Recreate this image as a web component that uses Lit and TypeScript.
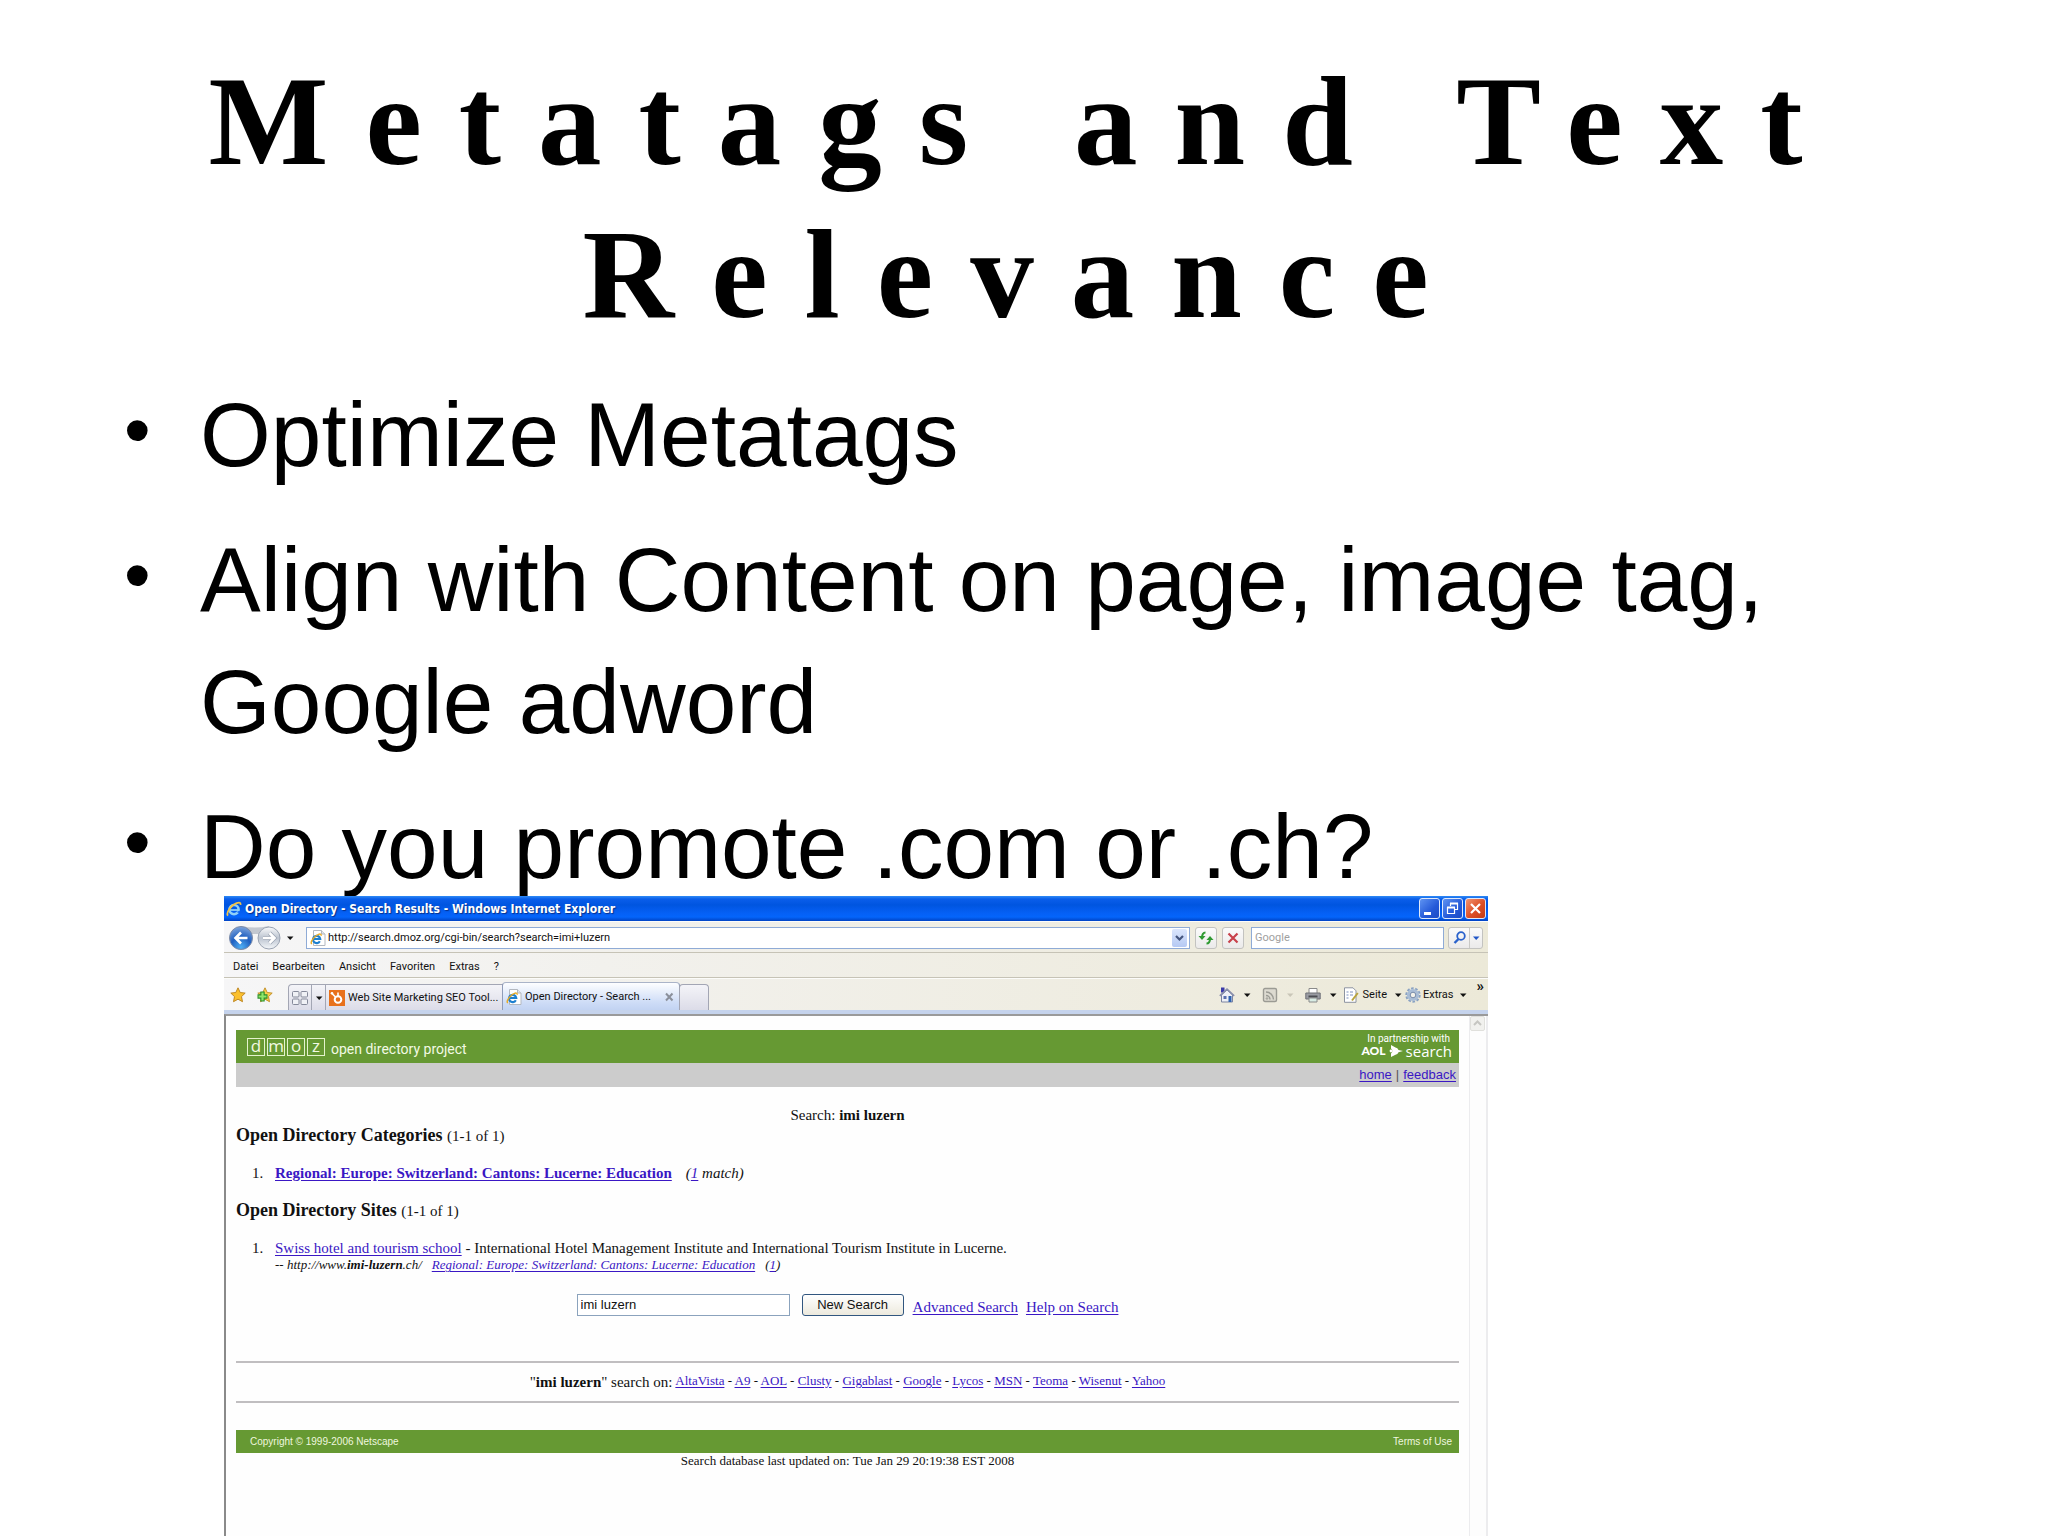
import { LitElement, html, css, svg, nothing } from "lit";
import { customElement } from "lit/decorators.js";

const ieIcon = html`<svg class="i16" viewBox="0 0 16 16" aria-hidden="true">
  <circle cx="8" cy="8.6" r="4.6" fill="none" stroke="#8fd0f8" stroke-width="2.6"/>
  <path d="M4 9h8.6" stroke="#8fd0f8" stroke-width="1.8"/>
  <path d="M11.500 10.200h4v1.600h-4z" fill="#0560f5"/>
  <path d="M2 14.600C-.6 12 5.500 4 10.500 2.200c3-1.200 4.300-.6 4 1.600" fill="none" stroke="#f5c443" stroke-width="1.800"/>
</svg>`;

const iePage = html`<svg class="i16" viewBox="0 0 16 16" aria-hidden="true">
  <path d="M3.500.5h8l3.500 3.500v11.500H3.500z" fill="#fff" stroke="#b3b8c0"/>
  <path d="M11.500.5v3.500H15" fill="#e4e8ee" stroke="#b3b8c0"/>
  <path d="M9.800 11.200A3.600 3.600 0 1 1 10.200 9H3.800" fill="none" stroke="#1c7fd0" stroke-width="2.200"/>
  <path d="M1.800 14C-.6 12 5 5.500 8.500 4.300c2-.6 3 0 2.500 1.400" fill="none" stroke="#e9aa22" stroke-width="1.400"/>
</svg>`;

const caret = (fill = "#111") => html`<svg class="caret" viewBox="0 0 8 8" aria-hidden="true"><path d="M1 2.500h6.500L4.200 6z" fill=${fill}/></svg>`;

const star = (fill: string, stroke: string) => svg`<path d="M8 .8l2.200 4.700 5 .6-3.700 3.500 1 5.100L8 12.200l-4.500 2.500 1-5.100L.8 6.100l5-.6z" fill=${fill} stroke=${stroke} stroke-width=".9" stroke-linejoin="round"/>`;

/** Title bar, address bar, menus and tabs of the browser. */
@customElement("browser-chrome")
class BrowserChrome extends LitElement {
  static styles = css`
    :host { display: block; font: 11px/14px Roboto, "Liberation Sans", sans-serif; color: #111; }
    svg { display: block; flex: none; }
    button, input { font: inherit; color: inherit; box-sizing: border-box; margin: 0; }
    button { display: flex; align-items: center; justify-content: center; padding: 0; border: 0; background: none; }
    .i16 { width: 16px; height: 16px; }
    .caret { width: 8px; height: 8px; }
    .title { display: flex; align-items: center; gap: 3px; height: 25px; padding: 0 2px; box-sizing: border-box;
      background: linear-gradient(#2f8bf5 0, #0a5eea 3px, #0055e0 9px, #0560f5 17px, #0465fb 21px, #0143c4 25px); }
    .title h2 { flex: 1; margin: 0; font: bold 12px/16px "DejaVu Sans Condensed", "DejaVu Sans", sans-serif; color: #fff; text-shadow: 1px 1px 1px #06308a; }
    .title button { width: 21px; height: 21px; border: 1px solid #dfe9fb; border-radius: 3px;
      background: linear-gradient(135deg, #5e93f2, #2459d8 60%, #1c4cc4); }
    .title .close { background: linear-gradient(135deg, #f0936f, #dd4f26 55%, #c53c14); }
    .wins { display: flex; gap: 2px; }
    .bar { display: flex; align-items: center; box-sizing: border-box;
      background: linear-gradient(90deg, #f6f6f7, #f2f1ed 30%, #ece9d8); }
    .nav { height: 32px; padding: 1px 5px 0; gap: 5px; border-bottom: 1px solid #c6c3b6; border-top: 1px solid #fcfcfa; }
    .round { width: 52px; height: 26px; }
    .addr { display: flex; align-items: center; flex: 1; gap: 2px; height: 22px; padding: 0 2px 0 3px; margin-left: 7px; background: #fff; border: 1px solid #8fabd6; box-sizing: border-box; }
    .addr input { flex: 1; min-width: 0; border: 0; padding: 0; background: none; outline: none; }
    .addr button { width: 15px; height: 18px; background: linear-gradient(#dbe6fd, #b5c9f3); border-radius: 2px; }
    .tool { width: 22px; height: 22px; border: 1px solid #c3c3c0; border-radius: 3px; background: linear-gradient(#fbfbfb, #ebeaea); }
    .google { width: 193px; height: 22px; margin: 0 -1px 0 2px; padding: 0 3px; border: 1px solid #8fabd6; background: #fff; outline: none; }
    .google::placeholder { color: #a0a0a0; opacity: 1; }
    .split { display: flex; border: 1px solid #c3c3c0; border-radius: 3px; height: 22px; box-sizing: border-box; background: linear-gradient(#fbfbfb, #ebeaea); }
    .split button { width: 20px; }
    .split button + button { width: 13px; border-left: 1px solid #c9c9c6; }
    .menu { height: 25px; padding: 3px 9px 0; gap: 14px; border-bottom: 1px solid #c6c3b6; }
    .tabs { height: 32px; align-items: flex-end; padding-left: 5px; border-top: 1px solid #fcfcfa; }
    .fav { height: 31px; width: 18px; margin-right: 9px; }
    .tab { height: 26px; border: 1px solid #a3a6b4; border-bottom: 0; border-radius: 4px 4px 0 0; margin-right: -1px; gap: 3px; padding: 0 3px;
      justify-content: flex-start; background: linear-gradient(#f4f4f8, #dcdce8); white-space: nowrap; }
    .quick { width: 24px; margin-left: 5px; border-radius: 4px 0 0 0; }
    .drop { width: 15px; border-radius: 0; }
    .first { width: 178px; border-radius: 0; }
    .on { width: 178px; height: 28px; gap: 3px; background: linear-gradient(#fdfeff, #cfddf7 70%, #c2d3f2); border-color: #8f9cb8; border-top-color: #aab4c8; }
    .on span { flex: 1; text-align: left; }
    .blank { width: 30px; }
    .cmds { display: flex; align-items: center; align-self: stretch; margin-left: auto; padding-right: 4px; }
    .cmds button { height: 31px; gap: 3px; }
    .cmds .wide { gap: 8px; margin-right: 11px; }
    .cmds .print { margin-right: 6px; }
    .cmds .seite { gap: 4px; margin-right: 3px; }
    .cmds .more { align-self: flex-start; height: 14px; font-weight: bold; font-size: 15px; }
    .cmds .extras { gap: 2px; margin-right: 10px; }
    .label { margin-right: 3px; }
    .band { height: 4px; background: #c5d3ec; }
  `;

  render() {
    return html`
      <div class="title">
        ${ieIcon}
        <h2>Open Directory - Search Results - Windows Internet Explorer</h2>
        <div class="wins">
          <button aria-label="Minimieren"><svg width="19" height="19"><path d="M4 14.500h7" stroke="#fff" stroke-width="3"/></svg></button>
          <button aria-label="Wiederherstellen"><svg width="19" height="19" fill="none" stroke="#fff"><path d="M7.500 7V4.500h7v6H12" stroke-width="1.200"/><path d="M7 4.500h8M4 8.500h8" stroke-width="2"/><path d="M4.500 8.500h7v6h-7z" stroke-width="1.200"/></svg></button>
          <button class="close" aria-label="Schließen"><svg width="19" height="19"><path d="M5 5l9 9M14 5l-9 9" stroke="#fff" stroke-width="2.200"/></svg></button>
        </div>
      </div>
      <div class="bar nav">
        <svg class="round" viewBox="0 0 52 26" aria-hidden="true">
          <defs>
            <radialGradient id="b" cx=".5" cy=".9" r=".9"><stop offset="0" stop-color="#4fb0f5"/><stop offset=".5" stop-color="#1f5fc0"/><stop offset="1" stop-color="#7fa5dc"/></radialGradient>
            <linearGradient id="f" x2="0" y2="1"><stop offset="0" stop-color="#fafbfc"/><stop offset=".5" stop-color="#bcc4d0"/><stop offset="1" stop-color="#f4f7fa"/></linearGradient>
          </defs>
          <path d="M12 1q14 3 28 0v8H12z" fill="#c3c8d0"/>
          <circle cx="12" cy="13" r="11.500" fill="url(#b)" stroke="#7d8ba6"/>
          <path d="M18.500 13H7M12 7.500L6.500 13l5.500 5.500" fill="none" stroke="#fff" stroke-width="2.600"/>
          <circle cx="40" cy="13" r="11" fill="url(#f)" stroke="#9aa3b2"/>
          <path d="M34 13h11.500M40.500 8l5 5-5 5" fill="none" stroke="#9aa3b2" stroke-width="4"/>
          <path d="M34 13h11.500M40.500 8l5 5-5 5" fill="none" stroke="#fff" stroke-width="2.600"/>
        </svg>
        <button aria-label="Verlauf">${caret()}</button>
        <div class="addr">
          ${iePage}
          <input aria-label="Adresse" .value=${"http://search.dmoz.org/cgi-bin/search?search=imi+luzern"}>
          <button aria-label="Adressen"><svg width="11" height="10"><path d="M2 3l3.500 3.500L9 3" fill="none" stroke="#44557e" stroke-width="2.200"/></svg></button>
        </div>
        <button class="tool" aria-label="Aktualisieren"><svg width="18" height="16" viewBox="0 0 18 16" fill="none" stroke="#2f9a32" stroke-width="2"><path d="M8.500 2.500C6 2.500 5 4 5 8"/><path d="M1.500 6h7L5 10z" fill="#2f9a32" stroke="none"/><path d="M9.500 13.500c2.500 0 3.500-2 3.500-5"/><path d="M9.500 10h7L13 6z" fill="#2f9a32" stroke="none"/></svg></button>
        <button class="tool" aria-label="Stopp"><svg width="14" height="14"><path d="M2.500 2.500l9 9M11.500 2.500l-9 9" stroke="#c8414b" stroke-width="2.200"/></svg></button>
        <input class="google" aria-label="Google" placeholder="Google">
        <div class="split">
          <button aria-label="Suchen"><svg width="15" height="15" fill="none" stroke="#2a62cc"><circle cx="9" cy="6" r="3.800" stroke-width="1.800"/><path d="M6.500 9L2.500 13" stroke-width="2.400"/></svg></button>
          <button aria-label="Suchoptionen">${caret("#1f55c8")}</button>
        </div>
      </div>
      <div class="bar menu">${["Datei", "Bearbeiten", "Ansicht", "Favoriten", "Extras", "?"].map((m) => html`<button>${m}</button>`)}</div>
      <div class="bar tabs">
        <button class="fav" aria-label="Favoriten"><svg class="i16" viewBox="0 0 16 16">${star("#fbc02d", "#b9801a")}</svg></button>
        <button class="fav" aria-label="Hinzufügen"><svg class="i16" viewBox="0 0 16 16">${star("#fbcf4d", "#c08a20")}<path d="M5.500 4.500v10M.5 9.500h10" stroke="#2b8f2b" stroke-width="4.400"/><path d="M5.500 5.500v8M1.500 9.500h8" stroke="#8fe66a" stroke-width="2.200"/></svg></button>
        <button class="tab quick" aria-label="Schnellregisterkarten"><svg width="16" height="16" fill="#f0f1f6" stroke="#85899a"><rect x=".5" y="1.500" width="6.500" height="5.500" rx="1"/><rect x="9" y="1.500" width="6.500" height="5.500" rx="1"/><rect x=".5" y="9" width="6.500" height="5.500" rx="1"/><rect x="9" y="9" width="6.500" height="5.500" rx="1"/></svg></button>
        <button class="tab drop" aria-label="Registerkartenliste">${caret()}</button>
        <button class="tab first"><svg class="i16" viewBox="0 0 16 16"><rect width="16" height="16" fill="#e8711c"/><circle cx="9" cy="9.500" r="3.300" fill="none" stroke="#fff" stroke-width="2"/><path d="M2.500 3l4 4M9 6V2.500" stroke="#fff" stroke-width="1.600"/><circle cx="3" cy="3.200" r="1.300" fill="#fff"/></svg>Web Site Marketing SEO Tool...</button>
        <button class="tab on">${iePage}<span>Open Directory - Search ...</span><svg width="12" height="12"><path d="M2 2.500l6.500 7M8.500 2.500l-6.500 7" stroke="#8b909b" stroke-width="2"/></svg></button>
        <button class="tab blank" aria-label="Neue Registerkarte"></button>
        <div class="cmds">
          <button class="wide" aria-label="Startseite"><svg class="i16" viewBox="0 0 16 16"><path d="M2 .5h3.500v5H2z" fill="#3a3aa8"/><path d="M2.500 8v7h11V8L8 3z" fill="#eef0f6" stroke="#7d84a0"/><path d="M.8 8.800L8 2l7.200 6.800" fill="none" stroke="#8a90ac" stroke-width="1.600"/><path d="M9.500 9h3v6h-3z" fill="#2f62b0"/><path d="M4.500 9h3v3h-3z" fill="#5b6fae"/></svg>${caret()}</button>
          <button class="wide" aria-label="Feeds"><svg class="i16" viewBox="0 0 16 16" fill="none" stroke="#9b9b94"><rect x="1.500" y="1.500" width="13" height="13" rx="1.500" fill="#dcdad0" stroke-width="1.400"/><path d="M4 8.500a4 4 0 0 1 4 4M4 5a7.500 7.500 0 0 1 7.500 7.500" stroke-width="1.500"/><circle cx="5" cy="11.500" r=".8"/></svg>${caret("#c9c6b8")}</button>
          <button class="wide print" aria-label="Drucken"><svg class="i16" viewBox="0 0 16 16"><path d="M4 1.500h8v5H4z" fill="#fff" stroke="#8a8a8a"/><path d="M.8 6h14.400v6H.8z" fill="#9a9ca3" stroke="#6e7077"/><path d="M3.500 8.500h9v2h-9z" fill="#4b4d52"/><path d="M4 11h8v4H4z" fill="#d8ece4" stroke="#8a8a8a"/></svg>${caret()}</button>
          <button class="seite"><svg class="i16" viewBox="0 0 16 16"><path d="M1.500.8h8.500l3 3v11.500H1.500z" fill="#fff" stroke="#8d93a0"/><path d="M3.500 5h2M7 5h3M3.500 8h2M7 8h3M3.500 11h2" stroke="#7d8fc0" stroke-width="1.200"/><path d="M14.800 6L9 13.500" stroke="#b9a33c" stroke-width="2"/></svg><span class="label">Seite</span>${caret()}</button>
          <button class="extras"><svg class="i16" viewBox="0 0 16 16" fill="none"><circle cx="8" cy="8" r="6.700" stroke="#8aa2c2" stroke-width="2" stroke-dasharray="2.600 1.600"/><circle cx="8" cy="8" r="4.600" stroke="#a9bdd6" stroke-width="3"/><circle cx="8" cy="8" r="2.800" fill="#f2f1ea" stroke="#7389ab"/></svg><span class="label">Extras</span>${caret()}</button>
          <button class="more" aria-label="Weitere">»</button>
        </div>
      </div>
      <div class="band"></div>
    `;
  }
}

const PLACE = "Regional: Europe: Switzerland: Cantons: Lucerne: Education";
const ENGINES = ["AltaVista", "A9", "AOL", "Clusty", "Gigablast", "Google", "Lycos", "MSN", "Teoma", "Wisenut", "Yahoo"];

/** Search results page shown inside the browser. */
@customElement("directory-page")
class DirectoryPage extends LitElement {
  static styles = css`
    :host { display: flex; flex: 1; border-left: 2px solid #8a8a8a; border-top: 2px solid #9a9a9a; background: #fefefe; color: #111;
      font: 15px/18px "Liberation Serif", serif; }
    a { color: #3a17c4; text-underline-offset: 2px; }
    main { flex: 1; padding: 14px 10px 0; }
    .head { display: flex; justify-content: space-between; height: 33px; padding: 0 7px 0 11px; background: #669933; color: #fff; box-sizing: border-box; }
    .brand { display: flex; gap: 2px; align-items: flex-end; padding-bottom: 7px; color: #f2f9e4; font: 14px/14px Roboto, sans-serif; }
    .brand b { width: 16px; height: 16px; border: 1px solid #e4f2cc; font: 17px/13px "Open Sans", sans-serif; text-align: center; }
    .brand span { margin-left: 4px; }
    .aol { font: 10px/12px Roboto, sans-serif; text-align: right; padding-top: 3px; }
    .aol p { margin: 0 2px 0 0; }
    .aol div { display: flex; align-items: center; gap: 3px; height: 12px; }
    .aol strong { font: 900 12px/12px Lato, sans-serif; }
    .aol span { font: 15px/12px "Open Sans", sans-serif; }
    .links { display: flex; justify-content: flex-end; gap: 4px; height: 24px; padding-right: 3px; background: #cccccc; font: 13px/24px "Liberation Sans", sans-serif; color: #555; }
    .query { margin: 19px 0 0; text-align: center; }
    h3 { margin: 0; font-size: 18px; line-height: 22px; }
    h3 small { font-size: 15px; font-weight: normal; }
    ol { list-style: none; margin: 17px 0; padding: 0 0 0 16px; }
    li { display: grid; grid-template-columns: 23px 1fr; }
    li::before { content: "1."; }
    .cat { display: flex; gap: 14px; }
    .src { display: flex; gap: 10px; font: italic 13px/16px "Liberation Serif", serif; }
    form { display: flex; align-items: center; justify-content: center; height: 23px; margin: 20px 0 0; }
    form input { box-sizing: border-box; width: 213px; height: 22px; margin: 0 12px 0 0; padding: 0 3px; border: 1px solid #8ba3bd; font: 13px "Liberation Sans", sans-serif; color: #111; background: #fff; }
    form button { width: 102px; height: 22px; margin: 0 9px 0 0; padding: 0; border: 1px solid #31567f; border-radius: 3px; background: linear-gradient(#fff, #ece9dd); font: 13px "Liberation Sans", sans-serif; color: #111; }
    form a { margin-top: 5px; }
    form a + a { margin-left: 8px; }
    .rule { border: 0; height: 2px; margin: 0; background: #c0bec0; }
    .wide { margin-top: 45px; }
    .engines { display: flex; justify-content: center; gap: 3px; margin: 10px 0; }
    .engines span { font-size: 13px; line-height: 16px; }
    .foot { display: flex; justify-content: space-between; height: 23px; margin-top: 27px; padding: 0 7px 0 14px; box-sizing: border-box; background: #669933; color: #eef7df; font: 10px/24px "Liberation Sans", sans-serif; }
    .foot a { color: inherit; text-decoration: none; }
    .date { margin: 0; text-align: center; font-size: 13px; line-height: 16px; }
    .scroll { width: 16px; border: solid #ececee; border-width: 0 2px 0 1px; background: #fdfdfd; }
    .scroll button { display: block; width: 15px; height: 15px; padding: 0; border: 1px solid #e0e0dc; border-radius: 2px; background: #f1f1ee; }
    .scroll svg { display: block; }
  `;

  render() {
    return html`
      <main>
        <div class="head">
          <div class="brand">${[..."dmoz"].map((c) => html`<b>${c}</b>`)}<span>open directory project</span></div>
          <div class="aol">
            <p>In partnership with</p>
            <div><strong>AOL</strong><svg width="14" height="12" viewBox="0 0 14 12" aria-hidden="true"><path d="M2 0l4.500 2.500A4 4 0 0 1 9.500 5L14 6l-4.500 1.200a4 4 0 0 1-3 2.500L2 12V8.500a3 3 0 0 0 0-5z" fill="#fff"/><circle cx="2" cy="6" r="1.400" fill="#fff"/></svg><span>search</span></div>
          </div>
        </div>
        <div class="links"><a href="#home">home</a>|<a href="#feedback">feedback</a></div>
        <p class="query">Search: <b>imi luzern</b></p>
        <h3>Open Directory Categories <small>(1-1 of 1)</small></h3>
        <ol><li><div class="cat"><b><a href="#cat">${PLACE}</a></b><i>(<a href="#match">1</a> match)</i></div></li></ol>
        <h3>Open Directory Sites <small>(1-1 of 1)</small></h3>
        <ol><li><div>
          <div><a href="#imi">Swiss hotel and tourism school</a> - International Hotel Management Institute and International Tourism Institute in Lucerne.</div>
          <div class="src"><span>-- http://www.<b>imi-luzern</b>.ch/</span><a href="#cat">${PLACE}</a><span>(<a href="#one">1</a>)</span></div>
        </div></li></ol>
        <form @submit=${(e: Event) => e.preventDefault()}>
          <input aria-label="Search" .value=${"imi luzern"}>
          <button>New Search</button>
          <a href="#advanced">Advanced Search</a>
          <a href="#help">Help on Search</a>
        </form>
        <hr class="rule wide">
        <div class="engines"><div>"<b>imi luzern</b>" search on:</div><span>${ENGINES.map((e, i) => html`${i ? " - " : nothing}<a href="#${e}">${e}</a>`)}</span></div>
        <hr class="rule">
        <div class="foot"><span>Copyright © 1999-2006 Netscape</span><a href="#terms">Terms of Use</a></div>
        <p class="date">Search database last updated on: Tue Jan 29 20:19:38 EST 2008</p>
      </main>
      <div class="scroll"><button aria-label="Nach oben"><svg width="13" height="13"><path d="M3 8l3.500-3.500L10 8" fill="none" stroke="#c6c6c2" stroke-width="2"/></svg></button></div>
    `;
  }
}

@customElement("app-root")
class AppRoot extends LitElement {
  static styles = css`
    :host { display: flex; flex-direction: column; height: 100vh; overflow: hidden; box-sizing: border-box; padding-top: 45px; background: #fff; color: #000; }
    h1 { margin: 0 0 23px; padding: 0 120px; text-align: center; font: bold 127px/153px "Liberation Serif", serif; letter-spacing: 37px; }
    ul { margin: 0; padding: 0 120px 0 124px; list-style: none; display: flex; flex-direction: column; gap: 23px; font: 91px/122px "Liberation Sans", sans-serif; }
    li { display: grid; grid-template-columns: 76px 1fr; }
    li::before { content: "•"; font-size: 76px; line-height: 112px; }
    .window { position: relative; display: flex; flex-direction: column; flex: 1; margin: -12px 560px 0 224px; background: #fff; }
  `;

  render() {
    return html`
      <h1>Metatags and Text Relevance</h1>
      <ul>
        <li>Optimize Metatags</li>
        <li>Align with Content on page, image tag, Google adword</li>
        <li>Do you promote .com or .ch?</li>
      </ul>
      <section class="window" aria-label="Internet Explorer">
        <browser-chrome></browser-chrome>
        <directory-page></directory-page>
      </section>
    `;
  }
}
